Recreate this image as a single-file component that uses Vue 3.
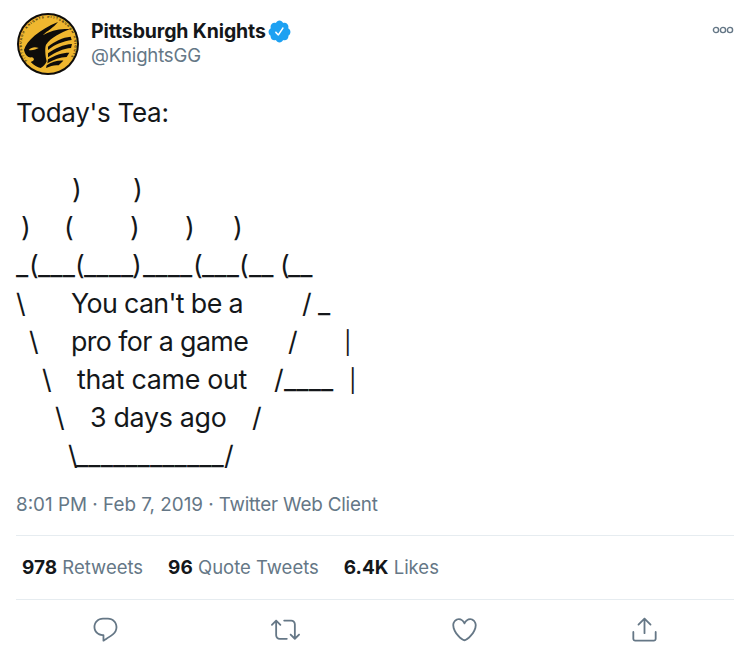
<script setup>
// Each art row is a list of [x, text, letterSpacing?] tab stops measured from the left edge of the page.
const rows = [
  [[72, ")"], [133, ")"]],
  [[21, ")"], [64, "("], [130, ")"], [185, ")"], [233, ")"]],
  [[15, "_"], [28, "("], [37, "___"], [74, "("], [83, "____"], [131, ")"], [142, "____"], [192, "("], [201, "___"], [238, "("], [248, "__"], [279, "("], [287, "__"]],
  [[16, "\\"], [71, "You can't be a", -0.65], [302, "/"], [318, "_"]],
  [[29, "\\"], [71, "pro for a game", -0.6], [288, "/"], [344, "|"]],
  [[42, "\\"], [77, "that came out"], [274, "/"], [284, "____"], [349, "|"]],
  [[55, "\\"], [90, "3 days ago"], [252, "/"]],
  [[68, "\\"], [76, "____________"], [224, "/"]],
]
const cells = (row) =>
  row.map(([x, text, ls], i) => ({
    text,
    style: {
      width: (i + 1 < row.length ? row[i + 1][0] : 734) - x + "px",
      ...(ls ? { letterSpacing: ls + "px" } : {}),
    },
    kind: text === "|" ? "bar" : text[0] === "_" ? "rule" : "",
  }))
const indent = (row) => row[0][0] - 16
const stats = [
  { n: "978", l: "Retweets" },
  { n: "96", l: "Quote Tweets" },
  { n: "6.4K", l: "Likes" },
]
</script>

<template>
  <div class="tweet">
    <header class="head">
      <svg class="avatar" viewBox="21 13 186 186">
        <circle cx="114" cy="106" r="93" fill="#0e0c0a" />
        <circle cx="114" cy="106" r="87" fill="#efb72f" />
        <path id="ringpath" d="M 52 156 A 79 79 0 1 1 176 156 A 79 79 0 0 1 52 156" fill="none" />
        <text class="ringtext"><textPath href="#ringpath">PITTSBURGH KNIGHTS PITTSBURGH KNIGHTS</textPath></text>
        <path fill="#0e0c0a" d="M42 124C50 96 86 64 144 40C130 58 112 66 98 80C122 66 150 58 180 62C152 72 124 86 108 108C104 118 106 140 110 158C106 168 100 174 92 178C82 176 72 170 62 160C72 158 76 150 66 146C54 148 46 140 42 124Z" />
        <path fill="#0e0c0a" d="M114 114C134 98 158 86 182 84L185 94C160 98 136 106 114 124ZM114 134C136 118 160 108 186 106L183 118C160 120 136 130 114 146ZM114 152C134 140 156 132 178 132L170 145C150 146 132 152 112 164ZM110 170C124 160 142 155 160 156L146 170C134 168 122 172 108 178Z" />
        <path fill="#efb72f" d="M56 124C64 116 74 114 86 118C78 122 68 126 56 124Z" />
      </svg>
      <div class="who">
        <div class="name-row">
          <span class="name">Pittsburgh Knights</span>
          <svg class="badge" viewBox="0 0 24 24"><path fill="#1da1f2" d="M22.5 12.5c0-1.58-.875-2.95-2.148-3.6.154-.435.238-.905.238-1.4 0-2.21-1.71-3.998-3.818-3.998-.47 0-.92.084-1.336.25C14.818 2.415 13.51 1.5 12 1.5s-2.816.917-3.437 2.25c-.415-.165-.866-.25-1.336-.25-2.11 0-3.818 1.79-3.818 4 0 .494.083.964.237 1.4-1.272.65-2.147 2.018-2.147 3.6 0 1.495.782 2.798 1.942 3.486-.02.17-.032.34-.032.514 0 2.21 1.708 4 3.818 4 .47 0 .92-.086 1.335-.25.62 1.334 1.926 2.25 3.437 2.25 1.512 0 2.818-.916 3.437-2.25.415.163.865.248 1.336.248 2.11 0 3.818-1.79 3.818-4 0-.174-.012-.344-.033-.513 1.158-.687 1.943-1.99 1.943-3.484zm-6.616-3.334l-4.334 6.5c-.145.217-.382.334-.625.334-.143 0-.288-.04-.416-.126l-.115-.094-2.415-2.415c-.293-.293-.293-.768 0-1.06s.768-.294 1.06 0l1.77 1.767 3.825-5.74c.23-.345.696-.436 1.04-.207.346.23.44.696.21 1.04z"/></svg>
        </div>
        <div class="handle">@KnightsGG</div>
      </div>
      <svg class="more" width="22" height="8" viewBox="0 0 22 8">
        <circle cx="4" cy="4" r="2.6" /><circle cx="11" cy="4" r="2.6" /><circle cx="18" cy="4" r="2.6" />
      </svg>
    </header>

    <div class="body">
      <div class="line title">Today's Tea:</div>
      <div class="line"></div>
      <div v-for="(row, i) in rows" :key="i" class="line art" :style="{ paddingLeft: indent(row) + 'px' }">
        <span v-for="(c, j) in cells(row)" :key="j" class="cell" :class="c.kind" :style="c.style">{{ c.text }}</span>
      </div>
    </div>

    <div class="meta"><span class="date">8:01 PM · Feb 7, 2019 </span><span class="via">· Twitter Web Client</span></div>

    <div class="stats">
      <span v-for="s in stats" :key="s.l" class="stat"><b>{{ s.n }}</b> {{ s.l }}</span>
    </div>

    <div class="actions">
      <svg class="ic" viewBox="0 0 24 24"><path d="M14.046 2.242l-4.148-.01h-.002c-4.374 0-7.8 3.427-7.8 7.802 0 4.098 3.186 7.206 7.465 7.37v3.828c0 .108.044.286.12.403.142.225.384.347.632.347.138 0 .277-.038.402-.118.264-.168 6.473-4.14 8.088-5.506 1.902-1.61 3.04-3.97 3.043-6.312v-.017c-.006-4.367-3.43-7.787-7.8-7.788zm3.787 12.972c-1.134.96-4.862 3.405-6.772 4.643V16.67c0-.414-.335-.75-.75-.75h-.396c-3.66 0-6.318-2.476-6.318-5.886 0-3.534 2.768-6.302 6.3-6.302l4.147.01h.002c3.532 0 6.3 2.766 6.302 6.296-.003 1.91-.942 3.844-2.514 5.176z"/></svg>
      <svg class="ic" viewBox="0 0 24 24"><path d="M23.77 15.67c-.292-.293-.767-.293-1.06 0l-2.22 2.22V7.65c0-2.068-1.683-3.75-3.75-3.75h-5.85c-.414 0-.75.336-.75.75s.336.75.75.75h5.85c1.24 0 2.25 1.01 2.25 2.25v10.24l-2.22-2.22c-.293-.293-.768-.293-1.06 0s-.294.768 0 1.06l3.5 3.5c.145.147.337.22.53.22s.383-.072.53-.22l3.5-3.5c.294-.292.294-.767 0-1.06zm-10.66 3.28H7.26c-1.24 0-2.25-1.01-2.25-2.25V6.46l2.22 2.22c.148.147.34.22.532.22s.384-.073.53-.22c.293-.293.293-.768 0-1.06l-3.5-3.5c-.293-.294-.768-.294-1.06 0l-3.5 3.5c-.294.292-.294.767 0 1.06s.767.293 1.06 0l2.22-2.22V16.7c0 2.068 1.683 3.75 3.75 3.75h5.85c.414 0 .75-.336.75-.75s-.337-.75-.75-.75z"/></svg>
      <svg class="ic" viewBox="0 0 24 24"><path d="M12 21.638h-.014C9.403 21.59 1.95 14.856 1.95 8.478c0-3.064 2.525-5.754 5.403-5.754 2.29 0 3.83 1.58 4.646 2.73.814-1.148 2.354-2.73 4.645-2.73 2.88 0 5.404 2.69 5.404 5.755 0 6.376-7.454 13.11-10.037 13.157H12zM7.354 4.225c-2.08 0-3.903 1.988-3.903 4.255 0 5.74 7.034 11.596 8.55 11.658 1.518-.062 8.55-5.917 8.55-11.658 0-2.267-1.823-4.255-3.903-4.255-2.528 0-3.94 2.936-3.952 2.965-.23.562-1.156.562-1.387 0-.014-.03-1.425-2.965-3.954-2.965z"/></svg>
      <svg class="ic" viewBox="0 0 24 24"><path d="M17.53 7.47l-5-5c-.293-.293-.768-.293-1.06 0l-5 5c-.294.293-.294.768 0 1.06s.767.294 1.06 0l3.72-3.72V15c0 .414.336.75.75.75s.75-.336.75-.75V4.81l3.72 3.72c.146.147.338.22.53.22s.384-.072.53-.22c.293-.293.293-.767 0-1.06z"/><path d="M19.708 21.944H4.292C3.028 21.944 2 20.916 2 19.652V14c0-.414.336-.75.75-.75s.75.336.75.75v5.652c0 .437.355.792.792.792h15.416c.437 0 .792-.355.792-.792V14c0-.414.336-.75.75-.75s.75.336.75.75v5.652c0 1.264-1.028 2.292-2.292 2.292z"/></svg>
    </div>
  </div>
</template>

<style>
html, body { background: #fff; }
</style>

<style scoped>
.tweet {
  width: 750px;
  height: 659px;
  box-sizing: border-box;
  padding: 12px 16px 0;
  overflow: hidden;
  font-family: Inter, "Liberation Sans", sans-serif;
  color: #14171a;
}
.head { display: flex; align-items: flex-start; height: 76px; }
.avatar { width: 62px; height: 62px; margin: 1px 12px 0 1px; flex: none; }
.who { flex: 1; padding-top: 5px; }
.name-row { display: flex; align-items: center; height: 28px; }
.name { font-size: 19.5px; font-weight: 700; letter-spacing: -0.13px; line-height: 28px; }
.badge { width: 25px; height: 25px; margin-left: 1px; }
.handle { font-size: 18.6px; line-height: 20px; color: #657786; letter-spacing: -0.2px; }
.more { margin-top: 14px; fill: none; stroke: #657786; stroke-width: 1.4; }
.body { padding-top: 6px; }
.line {
  font-size: 26px;
  line-height: 38px;
  height: 38px;
  white-space: pre;
  letter-spacing: -0.3px;
}
.art { display: flex; align-items: baseline; font-size: 26.8px; }
.cell { flex: none; }
.rule { letter-spacing: 0.1px; }
.bar { font-size: 22.5px; }
.meta { margin-top: 17px; font-size: 18.85px; line-height: 28px; color: #657786; }
.via { letter-spacing: -0.2px; }
.stats {
  margin-top: 16px;
  border-top: 1px solid #e6ecf0;
  border-bottom: 1px solid #e6ecf0;
  height: 63px;
  box-sizing: content-box;
  display: flex;
  align-items: center;
  gap: 25px;
  padding-left: 6px;
  font-size: 18.5px;
  color: #657786;
}
.stat { margin-bottom: 1px; }
.stat b { color: #14171a; font-weight: 700; font-size: 19px; }
.actions { display: flex; justify-content: space-around; padding-top: 15px; }
.ic { width: 29px; height: 29px; fill: #657786; }
.ringtext { font-family: "Liberation Sans", sans-serif; font-size: 9px; font-weight: 700; letter-spacing: 3.7px; fill: #0e0c0a; }
</style>
